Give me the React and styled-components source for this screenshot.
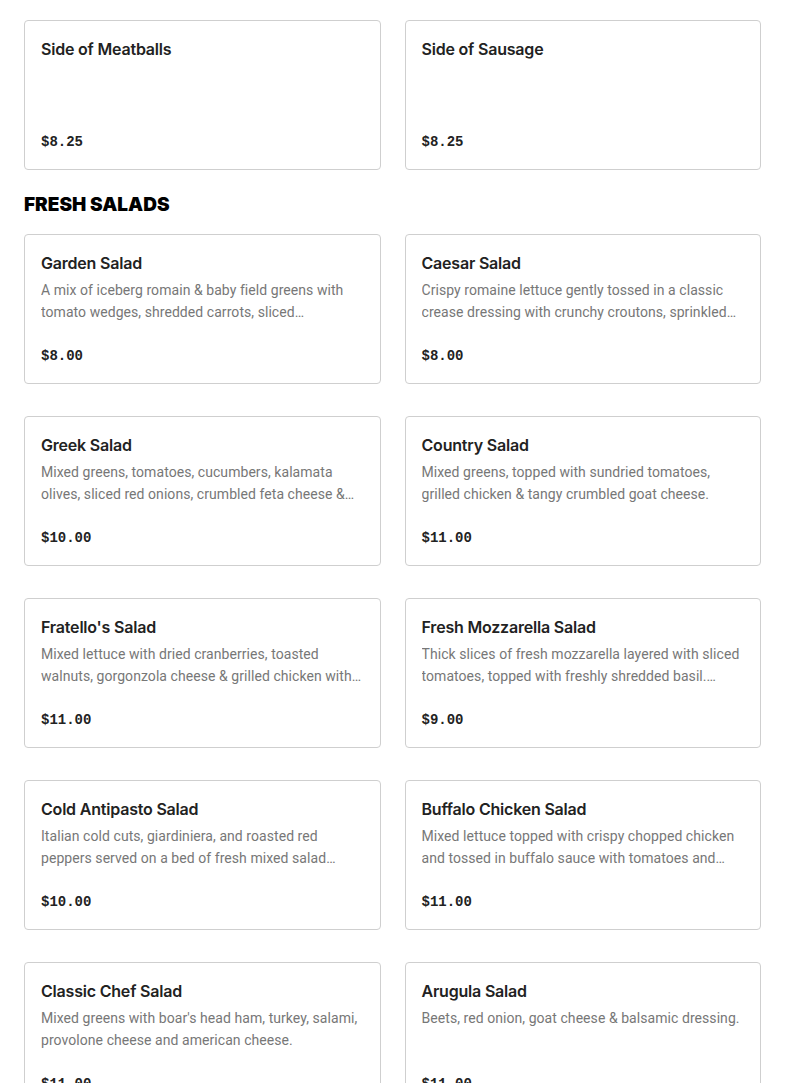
import styled, { createGlobalStyle } from "styled-components";

const sides = [
    { name: "Side of Meatballs", price: "$8.25" },
    { name: "Side of Sausage", price: "$8.25" },
];

const salads = [
    { name: "Garden Salad", desc: "A mix of iceberg romain & baby field greens with tomato wedges, shredded carrots, sliced cucumbers & red onions.", price: "$8.00" },
    { name: "Caesar Salad", desc: "Crispy romaine lettuce gently tossed in a classic crease dressing with crunchy croutons, sprinkled with parmesan cheese.", price: "$8.00" },
    { name: "Greek Salad", desc: "Mixed greens, tomatoes, cucumbers, kalamata olives, sliced red onions, crumbled feta cheese & greek dressing.", price: "$10.00" },
    { name: "Country Salad", desc: "Mixed greens, topped with sundried tomatoes, grilled chicken & tangy crumbled goat cheese.", price: "$11.00" },
    { name: "Fratello's Salad", desc: "Mixed lettuce with dried cranberries, toasted walnuts, gorgonzola cheese & grilled chicken with balsamic dressing.", price: "$11.00" },
    { name: "Fresh Mozzarella Salad", desc: "Thick slices of fresh mozzarella layered with sliced tomatoes, topped with freshly shredded basil. Drizzled with olive oil.", price: "$9.00" },
    { name: "Cold Antipasto Salad", desc: "Italian cold cuts, giardiniera, and roasted red peppers served on a bed of fresh mixed salad greens.", price: "$10.00" },
    { name: "Buffalo Chicken Salad", desc: "Mixed lettuce topped with crispy chopped chicken and tossed in buffalo sauce with tomatoes and blue cheese.", price: "$11.00" },
    { name: "Classic Chef Salad", desc: "Mixed greens with boar's head ham, turkey, salami, provolone cheese and american cheese.", price: "$11.00" },
    { name: "Arugula Salad", desc: "Beets, red onion, goat cheese & balsamic dressing.", price: "$11.00" },
];

const Item = ({ name, desc, price }) => (
    <Card>
        <Title>{name}</Title>
        {desc && <Desc>{desc}</Desc>}
        <Price>{price}</Price>
    </Card>
);

const App = () => {
    return (
        <Page>
            <GlobalStyle />
            <Grid>
                {sides.map(s => <Item key={s.name} {...s} />)}
            </Grid>
            <Heading>FRESH SALADS</Heading>
            <Grid>
                {salads.map(s => <Item key={s.name} {...s} />)}
            </Grid>
        </Page>
    );
};

const GlobalStyle = createGlobalStyle`
    body {
        margin: 0;
        background: #fff;
        font-family: "Inter", "Liberation Sans", sans-serif;
    }
`;

const Page = styled.main`
    padding: 20px 24px;
`;

const Grid = styled.div`
    display: grid;
    grid-template-columns: 1fr 1fr;
    column-gap: 24px;
    row-gap: 32px;
`;

const Heading = styled.h2`
    margin: 21px 0 15px;
    font-family: "Inter", sans-serif;
    font-weight: 900;
    font-size: 19px;
    line-height: 28px;
    color: #000;
`;

const Card = styled.div`
    height: 150px;
    box-sizing: border-box;
    display: flex;
    flex-direction: column;
    padding: 16px;
    background: #fff;
    border: 1px solid #cfcfcf;
    border-radius: 4px;
`;

const Title = styled.div`
    font-family: "Inter", sans-serif;
    font-weight: 600;
    font-size: 16px;
    line-height: 24px;
    color: #222;
    letter-spacing: -0.2px;
`;

const Desc = styled.p`
    margin: 4px 0 0;
    font-family: "Roboto", sans-serif;
    font-size: 14px;
    line-height: 22px;
    letter-spacing: 0.06px;
    color: #777;
    display: -webkit-box;
    -webkit-line-clamp: 2;
    -webkit-box-orient: vertical;
    overflow: hidden;
`;

const Price = styled.div`
    margin-top: auto;
    font-family: "Liberation Mono", monospace;
    font-weight: 700;
    font-size: 14px;
    line-height: 22px;
    color: #222;
`;

export default App;
